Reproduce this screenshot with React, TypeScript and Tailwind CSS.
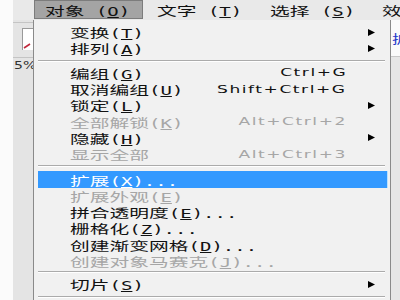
import React from 'react';

type Row =
  | { sep: true; box: string }
  | {
      sep?: false;
      zh: string;
      mn?: string;
      dots?: boolean;
      shortcut?: string;
      sub?: boolean;
      disabled?: boolean;
      active?: boolean;
    };

const rows: Row[] = [
  { zh: '变换', mn: 'T', sub: true },
  { zh: '排列', mn: 'A', sub: true },
  { sep: true, box: 'h-[8px] pt-[3px]' },
  { zh: '编组', mn: 'G', shortcut: 'Ctrl+G' },
  { zh: '取消编组', mn: 'U', shortcut: 'Shift+Ctrl+G' },
  { zh: '锁定', mn: 'L', sub: true },
  { zh: '全部解锁', mn: 'K', shortcut: 'Alt+Ctrl+2', disabled: true },
  { zh: '隐藏', mn: 'H', sub: true },
  { zh: '显示全部', shortcut: 'Alt+Ctrl+3', disabled: true },
  { sep: true, box: 'h-[9px] pt-[3px]' },
  { zh: '扩展', mn: 'X', dots: true, active: true },
  { zh: '扩展外观', mn: 'E', disabled: true },
  { zh: '拼合透明度', mn: 'E', dots: true },
  { zh: '栅格化', mn: 'Z', dots: true },
  { zh: '创建渐变网格', mn: 'D', dots: true },
  { zh: '创建对象马赛克', mn: 'J', dots: true, disabled: true },
  { sep: true, box: 'h-[7px] pt-[2px]' },
  { zh: '切片', mn: 'S', sub: true },
  { sep: true, box: 'h-[8px] pt-[4px]' },
];

function Label({ zh, mn, dots, space }: { zh: string; mn?: string; dots?: boolean; space?: boolean }) {
  return (
    <span className="inline-block origin-left scale-x-[1.58] whitespace-nowrap leading-none">
      <span className="font-['Noto_Sans_CJK_SC',sans-serif] text-[12.5px]">{zh}</span>
      {mn && (
        <span className="font-['DejaVu_Sans_Mono',monospace] text-[12px]">
          {space ? ' (' : '('}
          <span className="underline underline-offset-[1px]">{mn}</span>)
          {dots ? '...' : ''}
        </span>
      )}
    </span>
  );
}

function Arrow() {
  return (
    <svg width="7" height="7" viewBox="0 0 7 7" className="block">
      <polygon points="0,0 7,3.5 0,7" fill="#000" />
    </svg>
  );
}

function MenuRow({ row }: { row: Exclude<Row, { sep: true }> }) {
  const color = row.active ? 'text-white' : row.disabled ? 'text-[#a6a6a6]' : 'text-[#111]';
  return (
    <div
      className={
        'h-[16.3px] mx-[4px] mr-[3px] flex items-center pl-[32px] leading-none ' +
        (row.active ? 'bg-[#3399ff] shadow-[1px_0_0_#b9e1ff] ' : '') +
        color
      }
    >
      <div className="flex-1 flex items-center">
        <Label zh={row.zh} mn={row.mn} dots={row.dots} />
      </div>
      {row.shortcut && (
        <span className="inline-block origin-right scale-x-[1.55] font-['DejaVu_Sans',sans-serif] text-[11px] tracking-[1px] leading-none whitespace-nowrap">
          {row.shortcut}
        </span>
      )}
      <div className="w-[40px] pl-[21px] flex items-center">{row.sub && <Arrow />}</div>
    </div>
  );
}

export default function App() {
  return (
    <div className="w-[400px] h-[300px] overflow-hidden flex bg-[#fafafa] leading-none">
      {/* white strip on the far left */}
      <div className="w-[13px] shrink-0 bg-[#fbfbfb]" />

      <div className="flex-1 flex flex-col">
        {/* menu bar */}
        <div className="h-[20px] shrink-0 flex bg-[#e9e9e9] text-[#111]">
          <div className="w-[21px]" />
          <div className="w-[109px] h-[19px] bg-[#a4a4a4] border border-[#7c7c7c] flex items-center pl-[10px]">
            <Label zh="对象" mn="O" space />
          </div>
          <div className="w-[113px] flex items-center pl-[14px]">
            <Label zh="文字" mn="T" space />
          </div>
          <div className="w-[113px] flex items-center pl-[14px]">
            <Label zh="选择" mn="S" space />
          </div>
          <div className="flex-1 flex items-center pl-[13px] overflow-hidden">
            <Label zh="效果" />
          </div>
        </div>

        <div className="flex-1 flex">
          {/* tool strip under the menu */}
          <div className="w-[20px] shrink-0 bg-[#e4e4e4] flex flex-col">
            <div className="h-[2px]" />
            <div className="h-px bg-[#c4c4c4]" />
            <div className="h-[34px] flex pt-[5px] pl-[9px]">
              <div className="w-[11px] h-[22px] bg-white border-l border-t border-[#9a9a9a] flex items-end">
                <svg width="10" height="8" viewBox="0 0 10 8" className="mb-[1px]">
                  <line x1="1" y1="7" x2="7" y2="3" stroke="#c0283c" strokeWidth="1.6" />
                </svg>
              </div>
            </div>
            <div className="h-px bg-[#c4c4c4]" />
            <div className="pt-[3px] pl-[1px] flex overflow-hidden whitespace-nowrap">
              <span className="inline-block origin-left scale-x-[1.4] font-['DejaVu_Sans',sans-serif] text-[10px] leading-none text-[#333]">
                5%
              </span>
            </div>
          </div>

          {/* the open dropdown */}
          <div className="w-[358px] shrink-0 bg-[#f1f1f1] border-l border-r border-[#8a8a8a] flex flex-col pt-[4px]">
            {rows.map((row, i) =>
              row.sep ? (
                <div key={i} className={row.box + ' mx-[4px] mr-[5px]'}>
                  <div className="h-px bg-[#ababab]" />
                  <div className="h-px bg-white" />
                </div>
              ) : (
                <MenuRow key={i} row={row} />
              )
            )}
          </div>

          {/* panel peeking out on the right */}
          <div className="flex-1 flex flex-col overflow-hidden">
            <div className="h-[37px] bg-[#fafafa] pt-[13px] pl-[1px] flex border-b border-[#c8c8c8]">
              <span className="inline-block origin-left scale-x-[1.4] font-['Noto_Sans_CJK_SC',sans-serif] text-[12px] leading-none text-[#2338c8]">
                扩
              </span>
            </div>
            <div className="flex-1 bg-[#e6e6e6]" />
          </div>
        </div>
      </div>
    </div>
  );
}
